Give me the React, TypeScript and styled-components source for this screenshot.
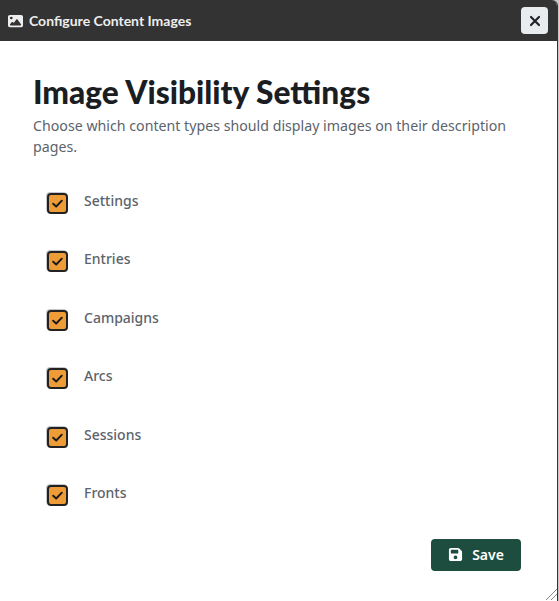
import styled, { createGlobalStyle } from "styled-components";

const GlobalStyle = createGlobalStyle`
  html, body {
    margin: 0;
    padding: 0;
    height: 100%;
    background: #c8c8c8;
    overflow: hidden;
  }
  body {
    font-family: "Noto Sans", "Open Sans", sans-serif;
  }
`;

const Dialog = styled.div`
  width: 558px;
  height: 601px;
  box-sizing: border-box;
  display: flex;
  flex-direction: column;
  background: #fff;
  border-right: 1px solid #333;
  border-top-right-radius: 6px;
  overflow: hidden;
`;

const TitleBar = styled.header`
  height: 41px;
  flex-shrink: 0;
  display: flex;
  align-items: center;
  justify-content: space-between;
  padding: 0 9px 0 8px;
  background: #333;
`;

const TitleText = styled.div`
  display: flex;
  align-items: center;
  gap: 6px;
  color: #eee;
  font-family: Lato, "Noto Sans", sans-serif;
  font-size: 14px;
  font-weight: 700;
`;

const CloseButton = styled.button`
  width: 27px;
  height: 27px;
  padding: 0;
  display: flex;
  align-items: center;
  justify-content: center;
  background: #e9ecef;
  border: 0;
  border-radius: 4px;
  color: #212529;
`;

const Body = styled.main`
  flex: 1;
  display: flex;
  flex-direction: column;
  padding: 33px 33px 30px;
`;

const Heading = styled.h2`
  margin: 0 0 5px;
  color: #1a1e23;
  font-family: Lato, "Noto Sans", sans-serif;
  font-size: 31.7px;
  line-height: 36px;
  font-weight: 900;
`;

const Intro = styled.p`
  margin: 0;
  color: #5c636b;
  font-size: 14.2px;
  line-height: 21px;
`;

const OptionList = styled.div`
  display: flex;
  flex-direction: column;
  gap: 36.5px;
  margin-top: 33.6px;
  padding-left: 14px;
`;

const Option = styled.label`
  display: flex;
  align-items: flex-start;
  gap: 16px;
  height: 22px;
  color: #5c636b;
  font-size: 14px;
  line-height: 20px;
  font-weight: 500;
`;

const CheckBox = styled.span`
  width: 21px;
  height: 21px;
  margin-top: 2px;
  box-sizing: border-box;
  display: flex;
  align-items: center;
  justify-content: center;
  background: #ee9c38;
  border: 2px solid #222;
  border-radius: 4px;
  box-shadow: -1px -1px 0 #c4c8cc;
`;

const Footer = styled.footer`
  margin-top: auto;
  display: flex;
  justify-content: flex-end;
  padding-right: 3px;
`;

const SaveButton = styled.button`
  width: 90px;
  height: 32px;
  display: flex;
  align-items: center;
  justify-content: center;
  gap: 9px;
  padding: 0 0 1px;
  background: #1c4d3e;
  border: 0;
  border-radius: 4px;
  color: #fff;
  font-family: inherit;
  font-size: 14px;
  font-weight: 600;
`;

const ResizeGrip = styled.svg`
  position: absolute;
  right: 2px;
  bottom: 1px;
`;

const options = ["Settings", "Entries", "Campaigns", "Arcs", "Sessions", "Fronts"];

function App() {
  return (
    <>
      <GlobalStyle />
      <Dialog>
        <TitleBar>
          <TitleText>
            <svg width="15" height="14" viewBox="0 0 512 512" fill="currentColor" preserveAspectRatio="none">
              <path d="M0 96C0 60.700 28.700 32 64 32h384c35.300 0 64 28.700 64 64v320c0 35.300-28.700 64-64 64H64c-35.300 0-64-28.700-64-64V96zm323.800 106.500c-4.500-6.600-11.900-10.500-19.800-10.500s-15.400 3.900-19.800 10.500l-87 127.600-26.500-33.100c-4.600-5.700-11.500-9-18.700-9s-14.200 3.300-18.700 9l-64 80c-5.800 7.200-6.900 17.100-2.900 25.400S78.800 416 88 416h336c8.900 0 17.100-4.900 21.200-12.800s3.600-17.400-1.400-24.700l-120-176zM112 192a48 48 0 1 0 0-96 48 48 0 1 0 0 96z" />
            </svg>
            Configure Content Images
          </TitleText>
          <CloseButton aria-label="Close">
            <svg width="12" height="12" viewBox="0 0 12 12" fill="none" stroke="currentColor" strokeWidth="2.2" strokeLinecap="round">
              <path d="M2 2l8 8M10 2l-8 8" />
            </svg>
          </CloseButton>
        </TitleBar>
        <Body>
          <Heading>Image Visibility Settings</Heading>
          <Intro>Choose which content types should display images on their description pages.</Intro>
          <OptionList>
            {options.map((name) => (
              <Option key={name}>
                <CheckBox>
                  <svg width="13" height="11" viewBox="0 0 12 10" fill="none" stroke="#1b1b1b" strokeWidth="1.8" strokeLinecap="round" strokeLinejoin="round">
                    <path d="M2 5.200l2.800 2.600L10 2.400" />
                  </svg>
                </CheckBox>
                {name}
              </Option>
            ))}
          </OptionList>
          <Footer>
            <SaveButton>
              <svg width="15" height="15" viewBox="0 0 448 512" fill="currentColor">
                <path d="M64 32C28.700 32 0 60.700 0 96v320c0 35.300 28.700 64 64 64h320c35.300 0 64-28.700 64-64V173.300c0-17-6.700-33.300-18.700-45.300L352 50.700C340 38.700 323.700 32 306.700 32H64zm0 96c0-17.700 14.300-32 32-32h192c17.700 0 32 14.300 32 32v64c0 17.700-14.300 32-32 32H96c-17.700 0-32-14.300-32-32v-64zm160 160a64 64 0 1 1 0 128 64 64 0 1 1 0-128z" />
              </svg>
              Save
            </SaveButton>
          </Footer>
        </Body>
        <ResizeGrip width="12" height="12" viewBox="0 0 12 12" fill="none" stroke="#888" strokeWidth="1">
          <path d="M1 12L12 1M6 12l6-6" />
        </ResizeGrip>
      </Dialog>
    </>
  );
}

export default App;
